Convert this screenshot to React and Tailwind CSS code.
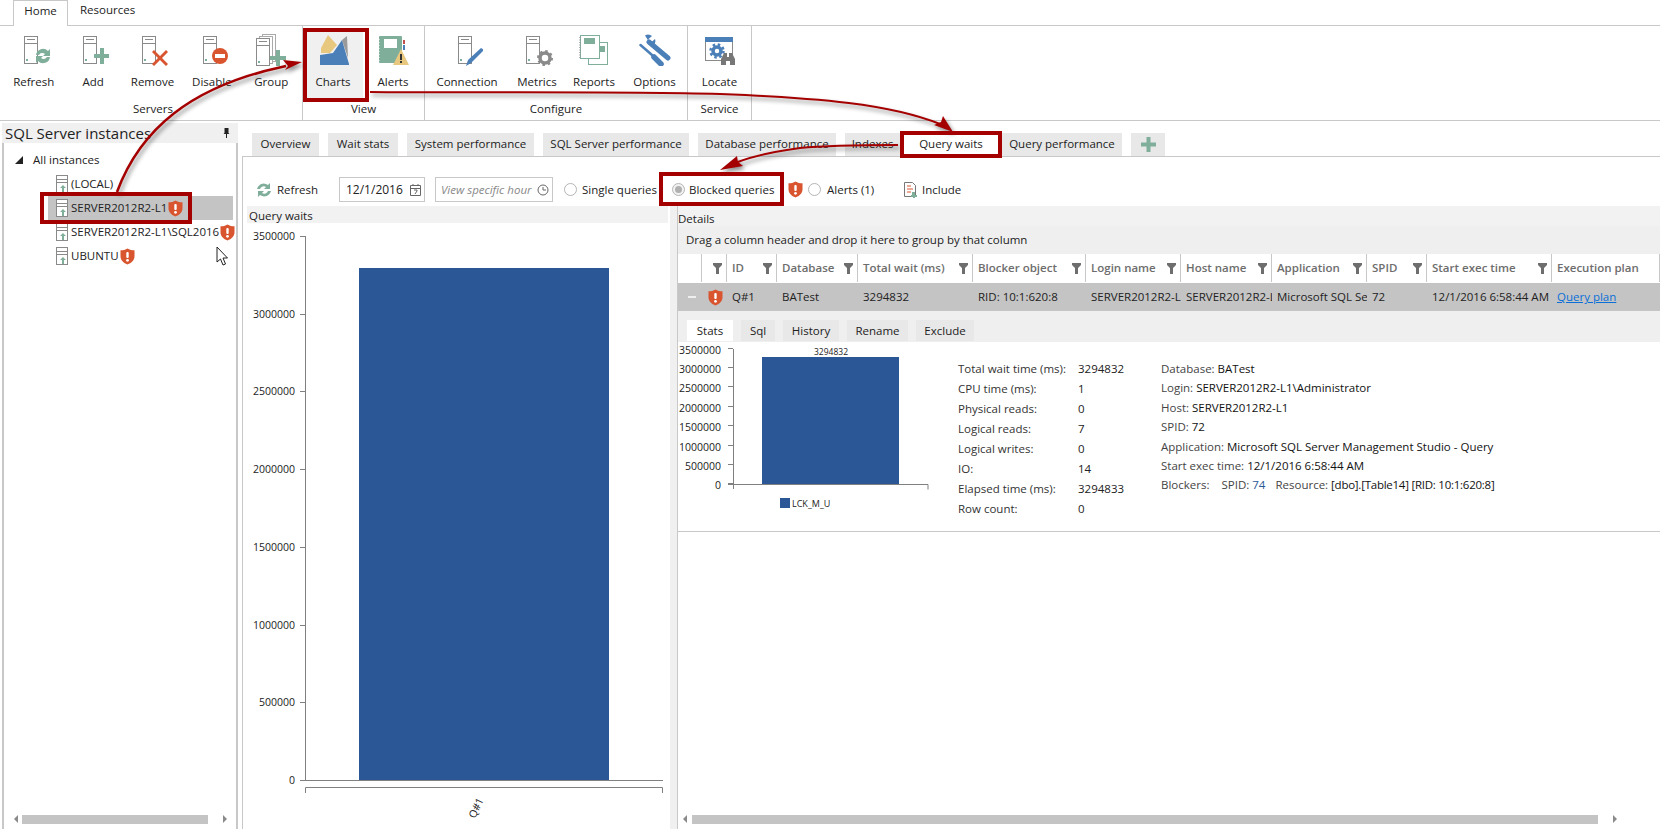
import React from "react";

const G = "#7fae9b", GR = "#8a8a8a", B = "#4b7fb8", R = "#d9552f";

function Server({ x = 6, y = 2 }) {
  return (
    <g transform={`translate(${x} ${y})`}>
      <rect x="0.5" y="0.5" width="13" height="27" fill="#fff" stroke={GR} />
      <line x1="3" x2="11" y1="3.5" y2="3.5" stroke={GR} />
      <line x1="1" x2="13" y1="7.5" y2="7.5" stroke={GR} />
      <rect x="2" y="23" width="2" height="2" fill={G} />
    </g>
  );
}

function Icon({ children }) {
  return <svg width="32" height="32" viewBox="0 0 32 32" className="block">{children}</svg>;
}

const icons = {
  Refresh: (
    <Icon>
      <Server />
      <path d="M18 21a7 7 0 0 1 12-4l2-2v7h-7l2-2a4 4 0 0 0-6 1z" fill={G} />
      <path d="M32 23a7 7 0 0 1-12 4l-2 2v-7h7l-2 2a4 4 0 0 0 6-1z" fill={G} />
    </Icon>
  ),
  Add: (
    <Icon>
      <Server />
      <path d="M23 14h4v6h6v4h-6v6h-4v-6h-6v-4h6z" fill={G} />
    </Icon>
  ),
  Remove: (
    <Icon>
      <Server x={6} />
      <path d="M18 16l6 6 6-6 2 2-6 6 6 6-2 2-6-6-6 6-2-2 6-6-6-6z" fill={R} />
    </Icon>
  ),
  Disable: (
    <Icon>
      <Server x={7} />
      <circle cx="24" cy="22" r="8" fill={R} />
      <rect x="19" y="20" width="10" height="4" fill="#fff" />
    </Icon>
  ),
  Group: (
    <Icon>
      <rect x="7.5" y="0.5" width="13" height="27" fill="#fff" stroke="#aaa" />
      <rect x="4.5" y="2.5" width="13" height="27" fill="#fff" stroke="#aaa" />
      <Server x={1} y={4} />
      <path d="M21 16h4v6h6v4h-6v6h-4v-6h-6v-4h6z" fill={G} />
    </Icon>
  ),
  Charts: (
    <Icon>
      <path d="M4 14L11 1l9 10-7 8H4z" fill="#e8c77f" />
      <path d="M25 6l5-4 1 22z" fill="#9a9a9a" />
      <path d="M3 31V21l13-2 9-13 7 24v1z" fill={B} />
    </Icon>
  ),
  Alerts: (
    <Icon>
      <rect x="2" y="2" width="23" height="27" rx="1" fill={G} />
      <rect x="7" y="5" width="13" height="9" fill="#fff" />
      <path d="M2 5v22" stroke="#fff" strokeWidth="1" strokeDasharray="1 2" />
      <rect x="26" y="6" width="2" height="4" fill="#c0504d" />
      <rect x="26" y="11" width="2" height="5" fill={B} />
      <path d="M24 15l8 16H16z" fill="#e8c77f" />
      <rect x="23" y="20" width="2" height="6" fill="#333" />
      <rect x="23" y="27" width="2" height="2" fill="#333" />
    </Icon>
  ),
  Connection: (
    <Icon>
      <Server x={7} y={2} />
      <path d="M15 32l2-6L30 14l3 2-13 13z" fill={B} />
    </Icon>
  ),
  Metrics: (
    <Icon>
      <Server x={5} y={2} />
      <circle cx="24" cy="24" r="5" fill="none" stroke={GR} strokeWidth="3.5" />
      <circle cx="24" cy="24" r="7" fill="none" stroke={GR} strokeWidth="2" strokeDasharray="2.5 3" />
    </Icon>
  ),
  Reports: (
    <Icon>
      <rect x="10.5" y="8.5" width="19" height="22" fill="#fff" stroke={G} />
      <rect x="2.5" y="1.5" width="19" height="23" fill="#fff" stroke={G} />
      <path d="M2 3v21" stroke="#999" strokeDasharray="1 1.5" strokeWidth="1.5" />
      <rect x="6" y="4" width="11" height="6" fill={G} />
      <rect x="22" y="12" width="5" height="6" fill={G} />
    </Icon>
  ),
  Options: (
    <Icon>
      <path d="M6 1.500a6 6 0 0 1 7 .5l-4 3.500 3 3L16 5a6 6 0 0 1-3 7.500z" fill={B} />
      <path d="M10 8l19 16" stroke={B} strokeWidth="5" strokeLinecap="round" />
      <path d="M1.500 11l11.500 10" stroke={B} strokeWidth="2.500" strokeLinecap="round" />
      <path d="M15 23l7 7" stroke={B} strokeWidth="5.500" strokeLinecap="round" />
    </Icon>
  ),
  Locate: (
    <Icon>
      <rect x="1.5" y="3.5" width="27" height="23" fill="#fff" stroke={GR} />
      <rect x="1" y="3" width="28" height="5" fill={B} />
      <circle cx="13" cy="17" r="4" fill="none" stroke={B} strokeWidth="3.5" />
      <circle cx="13" cy="17" r="6.5" fill="none" stroke={B} strokeWidth="2.5" strokeDasharray="2.5 2.6" />
      <path d="M17 31v-6l3-6h3v4h2v-4h3l3 6v6h-5v-4h-4v4z" fill="#777" />
    </Icon>
  ),
};

function RibbonButton({ label, w, active }) {
  return (
    <div className={`flex h-[70px] flex-col items-center pt-[6px] ${active ? "bg-[#f0f0f0]" : ""}`} style={{ width: w }}>
      {icons[label]}
      <span className="mt-[8px] leading-[16px] whitespace-nowrap">{label}</span>
    </div>
  );
}

function RibbonGroup({ label, w, children }) {
  return (
    <div className="flex h-full shrink-0 flex-col border-r border-[#c8c8c8]" style={{ width: w }}>
      <div className="flex flex-1 pt-[2px]">{children}</div>
      <div className="h-[21px] text-center leading-[20px]">{label}</div>
    </div>
  );
}

function Shield({ className = "" }) {
  return (
    <svg width="15" height="17" viewBox="0 0 15 17" className={`shrink-0 ${className}`}>
      <path d="M7.5 0.5C9.5 1.8 12 2.3 14.5 2.3v6c0 4-3 6.8-7 8.2-4-1.400-7-4.200-7-8.200v-6C3 2.300 5.500 1.800 7.500 0.500z" fill={R} />
      <rect x="6.300" y="4" width="2.400" height="6" rx="1" fill="#fff" />
      <circle cx="7.500" cy="12.300" r="1.400" fill="#fff" />
    </svg>
  );
}

function TreeServer() {
  return (
    <svg width="14" height="20" viewBox="0 0 14 20" className="shrink-0">
      <rect x="1.500" y="1.500" width="11" height="17" fill="#fff" stroke="#8a8a8a" />
      <line x1="2" x2="12" y1="5.500" y2="5.500" stroke="#8a8a8a" />
      <line x1="2" x2="12" y1="8.500" y2="8.500" stroke="#8a8a8a" />
      <path d="M8 11l3 3h-2v4H7v-4H5z" fill={G} />
    </svg>
  );
}

function TreeRow({ label, sel, shield }) {
  return (
    <div className={`ml-[44px] flex h-[24px] w-[185px] items-center whitespace-nowrap pl-[7px] ${sel ? "bg-[#c4c4c4]" : ""}`}>
      <TreeServer />
      <span className="ml-[2px]">{label}</span>
      {shield && <Shield className="ml-[1px]" />}
    </div>
  );
}

function Scroll({ left, thumb, className = "" }) {
  return (
    <div className={`flex h-[10px] items-center text-[#777] ${className}`}>
      <svg width="4" height="8" viewBox="0 0 4 8" className="shrink-0"><path d="M4 0v8L0 4z" fill="#8a8a8a" /></svg>
      <div className="mx-[6px] h-[9px] bg-[#c4c4c4]" style={{ marginLeft: left, width: thumb }} />
      <svg width="4" height="8" viewBox="0 0 4 8" className="ml-[9px] shrink-0"><path d="M0 0v8l4-4z" fill="#8a8a8a" /></svg>
    </div>
  );
}

const TABS = [
  ["Overview", 67], ["Wait stats", 70], ["System performance", 127], ["SQL Server performance", 146],
  ["Database performance", 138], ["Indexes", 55], ["Query waits", 84, true], ["Query performance", 120],
];

function Funnel() {
  return (
    <svg width="9" height="11" viewBox="0 0 9 11" className="shrink-0">
      <path d="M0 0h9v2L6 5v6H3V5L0 2z" fill="#6e6e6e" />
    </svg>
  );
}

const COLS = [
  ["", 24, false, ""], ["", 25, true, ""], ["ID", 50, true, "Q#1"], ["Database", 81, true, "BATest"],
  ["Total wait (ms)", 115, true, "3294832"], ["Blocker object", 113, true, "RID: 10:1:620:8"],
  ["Login name", 95, true, "SERVER2012R2-L1\\Administrator"], ["Host name", 91, true, "SERVER2012R2-L1"],
  ["Application", 95, true, "Microsoft SQL Server Management Studio - Query"], ["SPID", 60, true, "72"],
  ["Start exec time", 125, true, "12/1/2016 6:58:44 AM"], ["Execution plan", 108, false, ""],
];
const GRID = "grid grid-cols-[24px_25px_50px_81px_115px_113px_95px_91px_95px_60px_125px_108px]";

const STATS = [
  ["Total wait time (ms):", "3294832"], ["CPU time (ms):", "1"], ["Physical reads:", "0"], ["Logical reads:", "7"],
  ["Logical writes:", "0"], ["IO:", "14"], ["Elapsed time (ms):", "3294833"], ["Row count:", "0"],
];

function BigChart() {
  const ticks = [3500000, 3000000, 2500000, 2000000, 1500000, 1000000, 500000, 0];
  return (
    <svg width="421" height="606" viewBox="247 223 421 606" className="block" fontFamily="'Open Sans', sans-serif" fontSize="10.500" fill="#222">
      <line x1="305.500" x2="305.500" y1="236" y2="780" stroke="#808080" />
      {ticks.map((t, i) => {
        const y = 236 + i * (544 / 7);
        return (
          <g key={t}>
            <line x1="300" x2="305" y1={Math.round(y) + 0.5} y2={Math.round(y) + 0.5} stroke="#808080" />
            <text x="295" y={y + 4} textAnchor="end">{t}</text>
          </g>
        );
      })}
      <rect x="359" y="268" width="250" height="512" fill="#2b5797" />
      <line x1="300" x2="663" y1="780.500" y2="780.500" stroke="#808080" />
      <path d="M305.500 793v-5.500h357v5.500" fill="none" stroke="#808080" />
      <text transform="translate(475 819) rotate(-65)" fontSize="10.500">Q#1</text>
    </svg>
  );
}

function SmallChart() {
  const ys = [350, 369, 388, 408, 427, 447, 466, 485];
  const ticks = [3500000, 3000000, 2500000, 2000000, 1500000, 1000000, 500000, 0];
  return (
    <svg width="273" height="190" viewBox="677 342 273 190" className="block shrink-0" fontFamily="'Open Sans', sans-serif" fontSize="10.500" fill="#222">
      <line x1="732.500" x2="732.500" y1="349" y2="489" stroke="#808080" />
      {ticks.map((t, i) => (
        <g key={t}>
          <line x1="727" x2="732" y1={ys[i] - 1.5} y2={ys[i] - 1.5} stroke="#808080" />
          <text x="720" y={ys[i] + 4} textAnchor="end">{t}</text>
        </g>
      ))}
      <rect x="761" y="357" width="137" height="127" fill="#2b5797" />
      <text x="830" y="355" textAnchor="middle" fontSize="8.500">3294832</text>
      <path d="M727 484.500h200v5" fill="none" stroke="#808080" />
      <rect x="779" y="498" width="10" height="10" fill="#2b5797" />
      <text x="791" y="507" fontSize="9">LCK_M_U</text>
    </svg>
  );
}

function Radio({ on }) {
  return (
    <span className={`flex h-[13px] w-[13px] shrink-0 items-center justify-center rounded-full border border-[#b5b5b5] ${on ? "bg-[#f2f2f2]" : "bg-white"}`}>
      {on && <span className="h-[7px] w-[7px] rounded-full bg-[#b0b0b0]" />}
    </span>
  );
}

function Overlay() {
  const red = "#a50000";
  return (
    <>
      <svg width="1660" height="829" viewBox="0 0 1660 829" className="pointer-events-none absolute left-0 top-0 drop-shadow-[2px_3px_2px_rgba(0,0,0,0.45)]">
        <path d="M117 192C140 130 190 86 286 66" fill="none" stroke={red} strokeWidth="2.500" />
        <path d="M302 62L283 60L288 66L285 70z" fill={red} />
        <path d="M370 92C470 93 610 91 720 94C820 98 890 104 940 124" fill="none" stroke={red} strokeWidth="2" />
        <path d="M953 132L934 125L941 122L943 116z" fill={red} />
        <path d="M898 145C860 145 830 145 800 148C770 152 750 157 735 163" fill="none" stroke={red} strokeWidth="2" />
        <path d="M720 170L737 156L738 162L743 166z" fill={red} />
      </svg>
      <div className="pointer-events-none absolute left-[303px] top-[28px] h-[74px] w-[66px] border-4 border-[#a50000]" />
      <div className="pointer-events-none absolute left-[40px] top-[192px] h-[32px] w-[152px] border-4 border-[#a50000]" />
      <div className="pointer-events-none absolute left-[900px] top-[131px] h-[27px] w-[102px] border-4 border-[#a50000]" />
      <div className="pointer-events-none absolute left-[659px] top-[172px] h-[34px] w-[125px] border-4 border-[#a50000]" />
      <svg width="12" height="21" viewBox="0 0 12 21" className="absolute left-[216px] top-[246px]">
        <path d="M1 1v15l3.500-3 2.500 6 2.500-1-2.500-6h4.500z" fill="#fff" stroke="#222" />
      </svg>
    </>
  );
}

export default function App() {
  return (
    <div className="relative h-[829px] w-[1660px] overflow-hidden bg-white font-['Open_Sans',sans-serif] text-[11.5px] text-[#222]">
      {/* ribbon tabs */}
      <div className="flex h-[26px] border-b border-[#c8c8c8] pl-[13px]">
        <div className="z-10 flex h-[26px] w-[55px] items-center justify-center border border-b-0 border-[#c8c8c8] bg-white pb-[5px]">Home</div>
        <div className="ml-[12px] flex h-[25px] items-center pb-[5px]">Resources</div>
      </div>
      {/* ribbon */}
      <div className="flex h-[95px] border-b border-[#c8c8c8] pl-[4px]">
        <RibbonGroup label="Servers" w={299}>
          {["Refresh", "Add", "Remove", "Disable", "Group"].map((l) => <RibbonButton key={l} label={l} w={59.4} />)}
        </RibbonGroup>
        <RibbonGroup label="View" w={122}>
          <RibbonButton label="Charts" w={60} active />
          <RibbonButton label="Alerts" w={60} />
        </RibbonGroup>
        <RibbonGroup label="Configure" w={263}>
          <RibbonButton label="Connection" w={84} />
          <RibbonButton label="Metrics" w={56} />
          <RibbonButton label="Reports" w={58} />
          <RibbonButton label="Options" w={63} />
        </RibbonGroup>
        <RibbonGroup label="Service" w={64}>
          <RibbonButton label="Locate" w={63} />
        </RibbonGroup>
      </div>
      {/* main */}
      <div className="flex h-[708px]">
        <div className="ml-[2px] mt-[2px] flex w-[236px] shrink-0 flex-col">
          <div className="flex h-[20px] items-center justify-between bg-[#f0f0f0] pl-[3px] pr-[8px] text-[15px]">
            <span>SQL Server instances</span>
            <svg width="7" height="10" viewBox="0 0 7 10"><path d="M1.500 0h4v5l1 1H4v4H3V6H.5l1-1z" fill="#222" /></svg>
          </div>
          <div className="flex flex-1 flex-col justify-between border-x-2 border-[#c8c8c8] pt-[5px]">
            <div>
              <div className="flex h-[24px] items-center pl-[11px]">
                <svg width="8" height="8" viewBox="0 0 8 8"><path d="M8 0v8H0z" fill="#222" /></svg>
                <span className="ml-[10px]">All instances</span>
              </div>
              <TreeRow label="(LOCAL)" />
              <TreeRow label="SERVER2012R2-L1" sel shield />
              <TreeRow label="SERVER2012R2-L1\SQL2016" shield />
              <TreeRow label="UBUNTU" shield />
            </div>
            <Scroll left="4px" thumb={186} className="mb-[5px] pl-[10px]" />
          </div>
        </div>
        <div className="ml-[4px] flex min-w-0 flex-1 flex-col pt-[12px]">
          <div className="flex h-[23px] gap-[9px] pl-[10px]">
            {TABS.map(([t, w, on]) => (
              <div key={t} className={`flex shrink-0 items-center justify-center pb-[1px] ${on ? "bg-white" : "bg-[#e8e8e8]"}`} style={{ width: w }}>{t}</div>
            ))}
            <div className="flex w-[34px] items-center justify-center bg-[#e8e8e8]">
              <svg width="15" height="15" viewBox="0 0 15 15"><path d="M5.500 0h4v5.500H15v4H9.500V15h-4V9.500H0v-4h5.500z" fill={G} /></svg>
            </div>
          </div>
          <div className="flex min-h-0 flex-1 flex-col border-l border-t border-[#c8c8c8]">
            <div className="flex h-[49px] shrink-0 items-center pl-[13px] pt-[16px]">
              <svg width="16" height="16" viewBox="0 0 16 16" className="shrink-0">
                <path d="M1 7a7 7 0 0 1 11-4l2-2v6H8l2-2a4 4 0 0 0-6 2z" fill={G} />
                <path d="M15 9a7 7 0 0 1-11 4l-2 2V9h6l-2 2a4 4 0 0 0 6-2z" fill={G} />
              </svg>
              <span className="ml-[5px] w-[62px]">Refresh</span>
              <div className="flex h-[25px] w-[86px] items-center justify-between border border-[#c8c8c8] pl-[6px] pr-[3px] text-[12px]">
                <span>12/1/2016</span>
                <svg width="11" height="13" viewBox="0 0 11 13"><path d="M.5 2.500h10v10H.5zM.5 5.500h10M3 1v2M8 1v2" fill="none" stroke="#666" /><path d="M4 7h3v1L5 11" fill="none" stroke="#666" /></svg>
              </div>
              <div className="ml-[10px] flex h-[25px] w-[118px] items-center justify-between border border-[#c8c8c8] pl-[5px] pr-[3px] text-[11.5px] italic text-[#888]">
                <span className="whitespace-nowrap">View specific hour</span>
                <svg width="12" height="12" viewBox="0 0 12 12" className="shrink-0"><circle cx="6" cy="6" r="5" fill="none" stroke="#666" /><path d="M6 3v3h3" fill="none" stroke="#666" /></svg>
              </div>
              <span className="ml-[11px]"><Radio /></span>
              <span className="ml-[5px] w-[90px] whitespace-nowrap">Single queries</span>
              <Radio on />
              <span className="ml-[4px] w-[99px] whitespace-nowrap">Blocked queries</span>
              <Shield />
              <span className="ml-[5px]"><Radio /></span>
              <span className="ml-[6px] w-[77px]">Alerts (1)</span>
              <svg width="13" height="16" viewBox="0 0 13 16" className="shrink-0">
                <path d="M.5.500h8l3 3v11H.5z" fill="#fff" stroke="#777" />
                <path d="M3 4h4M3 7h6M3 10h4" stroke={R} />
                <path d="M8 10h2v-0h1v3h2v2h-2v1H9v-1H7v-2h1z" fill={G} />
              </svg>
              <span className="ml-[5px]">Include</span>
            </div>
            <div className="flex min-h-0 flex-1 pl-[4px]">
              <div className="w-[421px] shrink-0">
                <div className="h-[17px] bg-[#f2f2f2] pl-[2px] pt-[1px] leading-[17px]">Query waits</div>
                <BigChart />
              </div>
              <div className="ml-[2px] w-[7px] shrink-0 bg-[#f0f0f0]" />
              <div className="flex min-w-0 flex-1 flex-col border-l border-[#c8c8c8]">
                <div className="h-[20px] shrink-0 bg-[#f2f2f2] pt-[4px] leading-[18px]">Details</div>
                <div className="h-[28px] shrink-0 bg-[#efefef] pl-[8px] leading-[27px]">Drag a column header and drop it here to group by that column</div>
                <div className={`${GRID} h-[29px] shrink-0 pb-[1px] font-semibold text-[#6d6d6d]`}>
                  {COLS.map(([h, w, f], i) => (
                    <div key={i} className="flex min-w-0 items-center justify-between whitespace-nowrap border-r border-[#c8c8c8] pl-[5px] pr-[4px]">
                      <span>{h}</span>
                      {f && <Funnel />}
                    </div>
                  ))}
                </div>
                <div className={`${GRID} h-[28px] shrink-0 items-center bg-[#c4c4c4]`}>
                  <div className="pl-[10px]"><div className="h-[2px] w-[8px] bg-[#eee]" /></div>
                  <div className="pl-[6px]"><Shield /></div>
                  {COLS.slice(2, 11).map(([h, w, f, v]) => (
                    <div key={h} className={`overflow-hidden whitespace-nowrap pl-[5px] ${h === "Host name" ? "pr-[7px]" : "pr-[3px]"}`}>{v}</div>
                  ))}
                  <div className="whitespace-nowrap pl-[5px] text-[#0a6fd8] underline">Query plan</div>
                </div>
                <div className="flex h-[31px] shrink-0 items-end gap-[8px] bg-[#efefef] pb-[1px] pl-[9px]">
                  {[["Stats", 46], ["Sql", 34], ["History", 56], ["Rename", 61], ["Exclude", 58]].map(([t, w], i) => (
                    <div key={t} className={`flex h-[21px] items-center justify-center ${i === 0 ? "bg-white" : "bg-[#e8e8e8]"}`} style={{ width: w }}>{t}</div>
                  ))}
                </div>
                <div className="flex h-[190px] shrink-0 border-b border-[#c8c8c8]">
                  <SmallChart />
                  <div className="ml-[7px] w-[203px] shrink-0 pt-[17px]">
                    {STATS.map(([a, b]) => (
                      <div key={a} className="flex h-[20px] items-center whitespace-nowrap">
                        <span className="w-[120px] text-[#333]">{a}</span>
                        <span>{b}</span>
                      </div>
                    ))}
                  </div>
                  <div className="pt-[17px] text-[#111]">
                    {[
                      ["Database: ", "BATest"], ["Login: ", "SERVER2012R2-L1\\Administrator"], ["Host: ", "SERVER2012R2-L1"],
                      ["SPID: ", "72"], ["Application: ", "Microsoft SQL Server Management Studio - Query"], ["Start exec time: ", "12/1/2016 6:58:44 AM"],
                    ].map(([a, b]) => (
                      <div key={a} className="h-[19.4px] whitespace-nowrap leading-[20px]"><span className="text-[#444]">{a}</span>{b}</div>
                    ))}
                    <div className="h-[19.400px] whitespace-nowrap leading-[20px]">
                      <span className="mr-[12px] text-[#444]">Blockers:</span>
                      <span className="text-[#444]">SPID: </span><span className="text-[#2b5797]">74</span>
                      <span className="ml-[10px] text-[#444]">Resource: </span><span className="tracking-[-0.25px]">[dbo].[Table14] [RID: 10:1:620:8]</span>
                    </div>
                  </div>
                </div>
                <div className="flex flex-1 items-end pb-[5px] pl-[5px]">
                  <Scroll left="5px" thumb={906} />
                </div>
              </div>
            </div>
          </div>
        </div>
      </div>
      <Overlay />
    </div>
  );
}
